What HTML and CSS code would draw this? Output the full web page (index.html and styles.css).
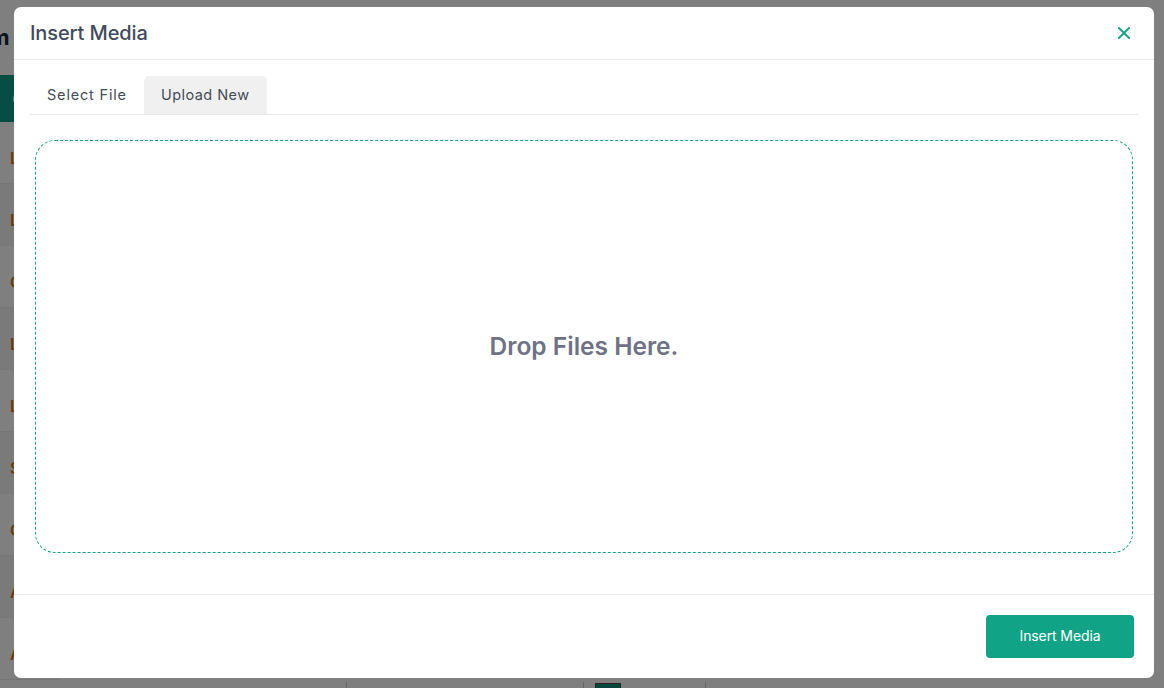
FILE: index.html
```html
<!DOCTYPE html>
<html lang="en">
<head>
<meta charset="utf-8">
<title>Insert Media</title>
<link rel="stylesheet" href="styles.css">
</head>
<body>
<div class="page">
  <div class="page-title">Item</div>
  <div class="page-side">
    <div class="side-active">C</div>
    <div class="side-row">L</div>
    <div class="side-row alt">L</div>
    <div class="side-row">C</div>
    <div class="side-row alt">L</div>
    <div class="side-row">L</div>
    <div class="side-row alt">S</div>
    <div class="side-row">C</div>
    <div class="side-row alt">A</div>
    <div class="side-row">A</div>
  </div>
  <div class="page-bottom">
    <div class="cell c1"></div>
    <div class="cell c2"><span class="sq"></span></div>
    <div class="cell c3"></div>
  </div>
</div>
<div class="overlay"></div>
<div class="modal">
  <div class="modal-header">
    <h2 class="modal-title">Insert Media</h2>
    <button class="close" aria-label="Close">
      <svg width="12" height="12" viewBox="0 0 12 12"><path d="M1 1L11 11M11 1L1 11" stroke="#17a589" stroke-width="2" stroke-linecap="square"/></svg>
    </button>
  </div>
  <div class="modal-body">
    <div class="tabs">
      <div class="tab">Select File</div>
      <div class="tab active">Upload New</div>
    </div>
    <div class="dropzone">Drop Files Here.</div>
  </div>
  <div class="modal-footer">
    <button class="btn-primary">Insert Media</button>
  </div>
</div>
</body>
</html>
```
FILE: styles.css
```css
* { box-sizing: border-box; }
html, body { margin: 0; padding: 0; }
body {
  width: 1164px;
  height: 688px;
  overflow: hidden;
  font-family: Inter, "Noto Sans", sans-serif;
  background: #fff;
  position: relative;
}
.page { position: relative; width: 1164px; height: 688px; }
.page-title {
  position: absolute;
  left: -38px;
  top: 24px;
  font-size: 22px;
  font-weight: 700;
  color: #1d2433;
}
.page-side {
  position: absolute;
  left: 0;
  top: 75px;
  width: 60px;
  display: flex;
  flex-direction: column;
}
.side-active {
  height: 47px;
  background: #0d9c86;
  color: #fff;
  display: flex;
  align-items: center;
  padding-left: 12px;
  font-size: 16px;
}
.side-row {
  height: 62px;
  display: flex;
  align-items: center;
  padding-left: 10px;
  padding-top: 10px;
  font-size: 16px;
  font-weight: 600;
  color: #d87511;
  background: #fff;
  border-bottom: 1px solid #eee;
}
.side-row.alt { background: #f5f5f5; }
.page-bottom {
  position: absolute;
  left: 346px;
  top: 682px;
  display: flex;
  height: 10px;
}
.cell { border-left: 1px solid #d0d0d0; height: 10px; }
.c1 { width: 237px; }
.c2 { width: 122px; position: relative; }
.c3 { width: 100px; }
.sq { position: absolute; left: 11px; top: 1px; width: 26px; height: 10px; background: #0b8e78; border: 1px solid #444; }

.overlay {
  position: absolute;
  inset: 0;
  background: rgba(0, 0, 0, 0.5);
}
.modal {
  position: absolute;
  left: 14px;
  top: 7px;
  width: 1140px;
  height: 671px;
  background: #fff;
  border-radius: 7px;
  display: flex;
  flex-direction: column;
}
.modal-header {
  height: 53px;
  padding: 0 16px;
  display: flex;
  align-items: center;
  justify-content: space-between;
  border-bottom: 1px solid #e9ecef;
}
.modal-title {
  margin: 0;
  font-size: 20px;
  font-weight: 500;
  color: #3f4a5c;
  letter-spacing: -0.1px;
}
.close {
  border: 0;
  background: transparent;
  padding: 0;
  width: 12px;
  height: 12px;
  margin-right: 8px;
  display: flex;
}
.modal-body {
  flex: 1;
  padding: 16px 16px 0;
  display: flex;
  flex-direction: column;
}
.tabs {
  display: flex;
  border-bottom: 1px solid #e5e7eb;
  height: 39px;
}
.tab {
  height: 38px;
  padding: 0 17px 2px;
  display: flex;
  align-items: center;
  font-size: 14.5px;
  letter-spacing: 0.82px;
  color: #454b55;
  border-radius: 5px 5px 0 0;
}
.tab.active {
  background: #f0f0f0;
  letter-spacing: 0.45px;
}
.dropzone {
  margin: 25px 5px 0;
  height: 413px;
  padding-bottom: 2px;
  border: 1px dashed #10a383;
  border-radius: 20px;
  display: flex;
  align-items: center;
  justify-content: center;
  font-size: 24.5px;
  font-weight: 600;
  color: #6f7285;
  letter-spacing: 0;
}
.modal-footer {
  height: 84px;
  border-top: 1px solid #e9ecef;
  display: flex;
  align-items: center;
  justify-content: flex-end;
  padding: 0 20px;
}
.btn-primary {
  width: 148px;
  height: 43px;
  border: 0;
  border-radius: 4px;
  background: #10a385;
  color: #fff;
  font-family: Inter, "Noto Sans", sans-serif;
  font-size: 14px;
  line-height: 16px;
  letter-spacing: -0.1px;
  padding: 0 0 1px;
}
```
